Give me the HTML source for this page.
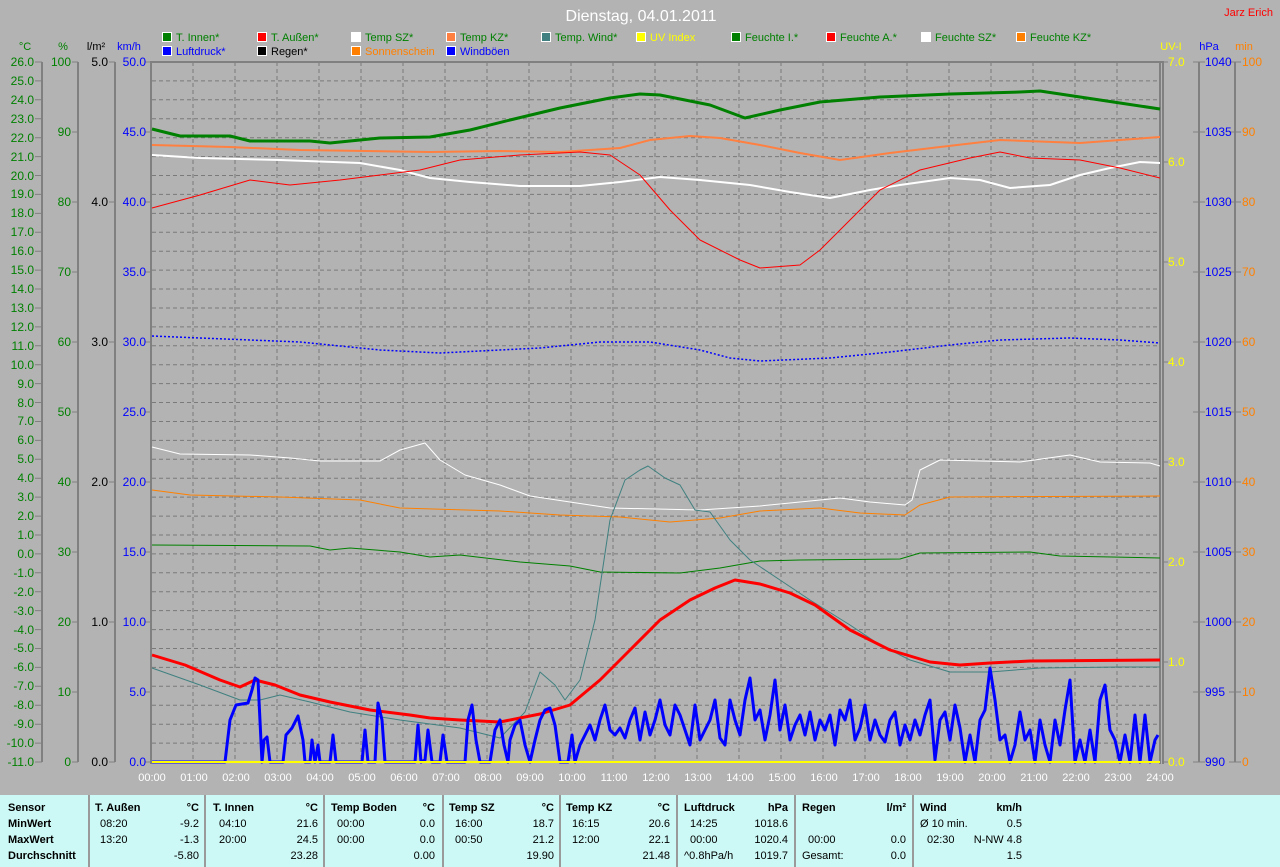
<!DOCTYPE html>
<html><head><meta charset="utf-8"><style>
html,body{margin:0;padding:0;width:1280px;height:867px;overflow:hidden;background:#b3b3b3;font-family:"Liberation Sans",sans-serif}
svg{display:block}
#tbl{position:absolute;left:0;top:795px;width:1280px;height:72px;background:#ccf8f5;font-size:11px;color:#000}
#tbl div{position:absolute;white-space:nowrap}
.b{font-weight:bold}
.sep{width:2px;top:0;height:72px;background:#9a9a9a}
.r{text-align:right}
</style></head><body>
<svg width="1280" height="795" viewBox="0 0 1280 795" font-family="Liberation Sans, sans-serif">
<rect width="1280" height="795" fill="#b3b3b3"/>
<text x="641" y="21" fill="#fff" font-size="16" text-anchor="middle">Dienstag, 04.01.2011</text>
<text x="1273" y="16" fill="#f00" font-size="11" text-anchor="end">Jarz Erich</text>
<g font-size="11">
<rect x="162.5" y="32.5" width="9" height="9" fill="#008000" stroke="#fff"/><text x="176" y="41" fill="#008000">T. Innen*</text>
<rect x="257.5" y="32.5" width="9" height="9" fill="#f00" stroke="#fff"/><text x="271" y="41" fill="#008000">T. Außen*</text>
<rect x="351.5" y="32.5" width="9" height="9" fill="#fff" stroke="#fff"/><text x="365" y="41" fill="#008000">Temp SZ*</text>
<rect x="446.5" y="32.5" width="9" height="9" fill="#ff8040" stroke="#fff"/><text x="460" y="41" fill="#008000">Temp KZ*</text>
<rect x="541.5" y="32.5" width="9" height="9" fill="#408080" stroke="#fff"/><text x="555" y="41" fill="#008000">Temp. Wind*</text>
<rect x="636.5" y="32.5" width="9" height="9" fill="#ff0" stroke="#fff"/><text x="650" y="41" fill="#ff0">UV Index</text>
<rect x="731.5" y="32.5" width="9" height="9" fill="#008000" stroke="#fff"/><text x="745" y="41" fill="#008000">Feuchte I.*</text>
<rect x="826.5" y="32.5" width="9" height="9" fill="#f00" stroke="#fff"/><text x="840" y="41" fill="#008000">Feuchte A.*</text>
<rect x="921.5" y="32.5" width="9" height="9" fill="#fff" stroke="#fff"/><text x="935" y="41" fill="#008000">Feuchte SZ*</text>
<rect x="1016.5" y="32.5" width="9" height="9" fill="#ff8000" stroke="#fff"/><text x="1030" y="41" fill="#008000">Feuchte KZ*</text>
<rect x="162.5" y="46.5" width="9" height="9" fill="#00f" stroke="#fff"/><text x="176" y="55" fill="#00f">Luftdruck*</text>
<rect x="257.5" y="46.5" width="9" height="9" fill="#000" stroke="#fff"/><text x="271" y="55" fill="#000">Regen*</text>
<rect x="351.5" y="46.5" width="9" height="9" fill="#ff8000" stroke="#fff"/><text x="365" y="55" fill="#ff8000">Sonnenschein</text>
<rect x="446.5" y="46.5" width="9" height="9" fill="#00f" stroke="#fff"/><text x="460" y="55" fill="#00f">Windböen</text>
</g>
<g font-size="11">
<text x="25" y="50" fill="#008000" text-anchor="middle">°C</text>
<text x="63" y="50" fill="#008000" text-anchor="middle">%</text>
<text x="96" y="50" fill="#000" text-anchor="middle">l/m²</text>
<text x="129" y="50" fill="#00f" text-anchor="middle">km/h</text>
<text x="1171" y="50" fill="#ff0" text-anchor="middle">UV-I</text>
<text x="1209" y="50" fill="#00f" text-anchor="middle">hPa</text>
<text x="1244" y="50" fill="#ff8000" text-anchor="middle">min</text>
</g>
<g stroke="#7a7a7a" stroke-dasharray="4,3" stroke-width="1">
<path d="M152 80.9H1160M152 99.8H1160M152 118.8H1160M152 137.7H1160M152 156.6H1160M152 175.5H1160M152 194.4H1160M152 213.4H1160M152 232.3H1160M152 251.2H1160M152 270.1H1160M152 289H1160M152 308H1160M152 326.9H1160M152 345.8H1160M152 364.7H1160M152 383.6H1160M152 402.5H1160M152 421.5H1160M152 440.4H1160M152 459.3H1160M152 478.2H1160M152 497.1H1160M152 516.1H1160M152 535H1160M152 553.9H1160M152 572.8H1160M152 591.7H1160M152 610.6H1160M152 629.6H1160M152 648.5H1160M152 667.4H1160M152 686.3H1160M152 705.2H1160M152 724.2H1160M152 743.1H1160"/>
<path d="M193 62V762M235 62V762M277 62V762M319 62V762M361 62V762M403 62V762M445 62V762M487 62V762M529 62V762M571 62V762M613 62V762M655 62V762M697 62V762M739 62V762M781 62V762M823 62V762M865 62V762M907 62V762M949 62V762M991 62V762M1033 62V762M1075 62V762M1117 62V762"/>
</g>
<g stroke="#808080" fill="none">
<path d="M151 61V764" stroke-width="2"/>
<path d="M150 62H1162" stroke-width="2"/>
<path d="M1160 61V764M1163 61V764" stroke-width="2"/>
<path d="M42 62V762M78 62V762M115 62V762M1199 62V762M1235 62V762" stroke-width="2"/>
<path d="M35 62H42M35 80.9H42M35 99.8H42M35 118.8H42M35 137.7H42M35 156.6H42M35 175.5H42M35 194.4H42M35 213.4H42M35 232.3H42M35 251.2H42M35 270.1H42M35 289H42M35 308H42M35 326.9H42M35 345.8H42M35 364.7H42M35 383.6H42M35 402.5H42M35 421.5H42M35 440.4H42M35 459.3H42M35 478.2H42M35 497.1H42M35 516.1H42M35 535H42M35 553.9H42M35 572.8H42M35 591.7H42M35 610.6H42M35 629.6H42M35 648.5H42M35 667.4H42M35 686.3H42M35 705.2H42M35 724.2H42M35 743.1H42M35 762H42"/>
<path d="M72 62H78M72 132H78M72 202H78M72 272H78M72 342H78M72 412H78M72 482H78M72 552H78M72 622H78M72 692H78M72 762H78"/>
<path d="M109 62H115M109 202H115M109 342H115M109 482H115M109 622H115M109 762H115"/>
<path d="M145 62H151M145 132H151M145 202H151M145 272H151M145 342H151M145 412H151M145 482H151M145 552H151M145 622H151M145 692H151M145 762H151"/>
<path d="M1163 62H1168M1163 162H1168M1163 262H1168M1163 362H1168M1163 462H1168M1163 562H1168M1163 662H1168M1163 762H1168"/>
<path d="M1193 62H1205M1193 132H1205M1193 202H1205M1193 272H1205M1193 342H1205M1193 412H1205M1193 482H1205M1193 552H1205M1193 622H1205M1193 692H1205M1193 762H1205"/>
<path d="M1229 62H1241M1229 132H1241M1229 202H1241M1229 272H1241M1229 342H1241M1229 412H1241M1229 482H1241M1229 552H1241M1229 622H1241M1229 692H1241M1229 762H1241"/>
</g>
<g font-size="12" fill="#008000" text-anchor="end">
<text x="34" y="66">26.0</text><text x="34" y="85">25.0</text><text x="34" y="104">24.0</text><text x="34" y="123">23.0</text><text x="34" y="142">22.0</text><text x="34" y="161">21.0</text><text x="34" y="180">20.0</text><text x="34" y="198">19.0</text><text x="34" y="217">18.0</text><text x="34" y="236">17.0</text><text x="34" y="255">16.0</text><text x="34" y="274">15.0</text><text x="34" y="293">14.0</text><text x="34" y="312">13.0</text><text x="34" y="331">12.0</text><text x="34" y="350">11.0</text><text x="34" y="369">10.0</text><text x="34" y="388">9.0</text><text x="34" y="407">8.0</text><text x="34" y="425">7.0</text><text x="34" y="444">6.0</text><text x="34" y="463">5.0</text><text x="34" y="482">4.0</text><text x="34" y="501">3.0</text><text x="34" y="520">2.0</text><text x="34" y="539">1.0</text><text x="34" y="558">0.0</text><text x="34" y="577">-1.0</text><text x="34" y="596">-2.0</text><text x="34" y="615">-3.0</text><text x="34" y="634">-4.0</text><text x="34" y="652">-5.0</text><text x="34" y="671">-6.0</text><text x="34" y="690">-7.0</text><text x="34" y="709">-8.0</text><text x="34" y="728">-9.0</text><text x="34" y="747">-10.0</text><text x="34" y="766">-11.0</text>
<text x="71" y="66">100</text><text x="71" y="136">90</text><text x="71" y="206">80</text><text x="71" y="276">70</text><text x="71" y="346">60</text><text x="71" y="416">50</text><text x="71" y="486">40</text><text x="71" y="556">30</text><text x="71" y="626">20</text><text x="71" y="696">10</text><text x="71" y="766">0</text>
</g>
<g font-size="12" fill="#000" text-anchor="end">
<text x="108" y="66">5.0</text><text x="108" y="206">4.0</text><text x="108" y="346">3.0</text><text x="108" y="486">2.0</text><text x="108" y="626">1.0</text><text x="108" y="766">0.0</text>
</g>
<g font-size="12" fill="#00f" text-anchor="end">
<text x="146" y="66">50.0</text><text x="146" y="136">45.0</text><text x="146" y="206">40.0</text><text x="146" y="276">35.0</text><text x="146" y="346">30.0</text><text x="146" y="416">25.0</text><text x="146" y="486">20.0</text><text x="146" y="556">15.0</text><text x="146" y="626">10.0</text><text x="146" y="696">5.0</text><text x="146" y="766">0.0</text>
</g>
<g font-size="12" fill="#ff0">
<text x="1168" y="66">7.0</text><text x="1168" y="166">6.0</text><text x="1168" y="266">5.0</text><text x="1168" y="366">4.0</text><text x="1168" y="466">3.0</text><text x="1168" y="566">2.0</text><text x="1168" y="666">1.0</text><text x="1168" y="766">0.0</text>
</g>
<g font-size="12" fill="#00f">
<text x="1205" y="66">1040</text><text x="1205" y="136">1035</text><text x="1205" y="206">1030</text><text x="1205" y="276">1025</text><text x="1205" y="346">1020</text><text x="1205" y="416">1015</text><text x="1205" y="486">1010</text><text x="1205" y="556">1005</text><text x="1205" y="626">1000</text><text x="1205" y="696">995</text><text x="1205" y="766">990</text>
</g>
<g font-size="12" fill="#ff8000">
<text x="1242" y="66">100</text><text x="1242" y="136">90</text><text x="1242" y="206">80</text><text x="1242" y="276">70</text><text x="1242" y="346">60</text><text x="1242" y="416">50</text><text x="1242" y="486">40</text><text x="1242" y="556">30</text><text x="1242" y="626">20</text><text x="1242" y="696">10</text><text x="1242" y="766">0</text>
</g>
<g font-size="11" fill="#fff" text-anchor="middle">
<text x="152" y="781">00:00</text><text x="194" y="781">01:00</text><text x="236" y="781">02:00</text><text x="278" y="781">03:00</text><text x="320" y="781">04:00</text><text x="362" y="781">05:00</text><text x="404" y="781">06:00</text><text x="446" y="781">07:00</text><text x="488" y="781">08:00</text><text x="530" y="781">09:00</text><text x="572" y="781">10:00</text><text x="614" y="781">11:00</text><text x="656" y="781">12:00</text><text x="698" y="781">13:00</text><text x="740" y="781">14:00</text><text x="782" y="781">15:00</text><text x="824" y="781">16:00</text><text x="866" y="781">17:00</text><text x="908" y="781">18:00</text><text x="950" y="781">19:00</text><text x="992" y="781">20:00</text><text x="1034" y="781">21:00</text><text x="1076" y="781">22:00</text><text x="1118" y="781">23:00</text><text x="1160" y="781">24:00</text>
</g>
<g fill="none" stroke-linejoin="round">
<polyline stroke="#008000" stroke-width="3" points="152,129 180,136 230,136 250,141 310,141 330,143 380,138 430,137 470,130 510,120 560,108 610,98 640,94 660,95 710,105 745,118 780,110 820,102 880,97 950,94 1020,92 1040,91 1080,97 1120,103 1160,109"/>
<polyline stroke="#ff8040" stroke-width="2" points="152,145 230,147 300,150 430,152 500,151 560,152 620,148 650,140 690,136 720,138 760,145 800,153 840,160 890,153 940,147 1000,140 1080,143 1160,137"/>
<polyline stroke="#fff" stroke-width="2" points="152,155 200,158 280,160 360,163 400,170 430,178 470,182 520,186 580,186 620,182 660,177 700,180 750,185 790,192 830,198 870,190 900,185 950,178 980,180 1010,188 1050,185 1080,175 1110,168 1140,162 1160,163"/>
<polyline stroke="#f00" stroke-width="1" points="152,208 200,195 250,180 290,185 340,180 380,175 420,170 460,160 520,155 580,152 610,155 640,175 670,210 700,240 740,260 760,268 800,265 820,250 850,220 880,190 920,170 970,158 1000,152 1030,158 1080,160 1120,168 1160,178"/>
<polyline stroke="#00f" stroke-width="1.5" stroke-dasharray="2,2" points="152,336 200,338 300,342 380,350 440,353 540,348 600,342 650,342 700,350 730,358 760,361 830,358 890,352 950,345 1000,340 1070,338 1120,340 1160,343"/>
<polyline stroke="#fff" stroke-width="1" points="152,447 180,454 250,455 290,458 320,461 380,461 400,450 425,443 440,460 465,475 500,485 530,496 570,502 610,508 700,510 760,506 800,502 840,498 870,502 905,505 912,500 920,470 940,460 1020,462 1070,455 1100,462 1150,463 1160,466"/>
<polyline stroke="#ff8000" stroke-width="1" points="152,490 190,495 280,497 360,500 400,508 500,511 560,515 620,517 670,522 720,518 760,511 820,508 860,513 905,515 920,505 950,497 1160,496"/>
<polyline stroke="#008000" stroke-width="1" points="152,545 310,546 330,550 350,548 400,552 430,557 460,555 520,562 570,566 600,572 680,573 720,568 760,561 800,560 900,559 920,553 1030,552 1060,556 1160,558"/>
<polyline stroke="#408080" stroke-width="1" points="152,668 200,685 240,700 260,700 280,695 310,702 350,712 400,720 460,728 500,738 525,712 540,672 555,685 565,700 580,680 595,620 610,520 625,480 640,470 648,466 665,478 680,485 695,510 710,512 730,540 750,560 780,580 810,600 850,625 880,645 910,660 950,672 990,672 1040,668 1120,667 1160,667"/>
<polyline stroke="#f00" stroke-width="3" points="152,655 185,665 220,680 240,687 255,680 275,685 300,695 330,702 370,710 410,715 430,718 460,720 500,722 540,714 570,705 600,680 630,650 660,620 690,600 715,588 735,580 760,584 790,593 815,605 850,630 890,650 930,662 960,665 990,663 1030,661 1160,660"/>
<polyline stroke="#00f" stroke-width="3" points="152,762 225,762 230,720 236,705 248,703 252,690 255,678 258,680 262,762 264,740 267,737 270,762 283,762 286,735 292,728 298,716 303,740 305,762 310,762 312,740 315,762 318,745 320,762 330,762 333,735 336,762 362,762 365,730 368,762 375,762 378,703 382,720 385,762 415,762 418,725 421,762 425,760 428,730 432,762 440,762 443,735 447,762 465,762 468,720 472,705 476,740 480,762 490,762 495,730 500,720 504,745 508,762 510,740 515,725 520,720 525,745 530,762 535,740 540,720 545,710 550,708 555,725 560,762 568,762 572,735 575,762 580,745 585,735 590,725 595,740 600,720 605,705 610,730 615,735 620,728 625,738 630,720 635,708 640,740 645,712 650,735 655,720 660,700 665,725 670,735 675,705 680,715 685,730 690,745 695,705 700,740 705,730 710,720 715,700 720,738 725,745 730,700 735,720 740,735 745,700 750,678 755,720 760,710 765,740 770,715 775,680 780,730 785,705 790,740 795,725 800,715 805,735 810,712 815,740 820,720 825,730 830,715 835,745 840,710 845,720 850,700 855,740 860,728 865,705 870,740 875,720 880,735 885,742 890,720 895,712 900,745 905,725 910,740 915,720 920,735 925,715 930,700 935,760 940,720 945,712 950,740 955,705 960,728 965,762 970,735 975,762 980,720 985,710 990,668 995,700 1000,740 1005,735 1010,762 1015,745 1020,712 1025,740 1030,730 1035,762 1040,720 1045,745 1050,762 1055,720 1060,745 1065,710 1070,680 1075,762 1080,740 1085,762 1090,730 1095,762 1100,700 1105,685 1110,730 1115,740 1120,762 1125,735 1130,762 1135,715 1140,762 1145,715 1150,762 1155,740 1158,735"/>
<path d="M152 762H1160" stroke="#ff0" stroke-width="2"/>
</g>
</svg>
<div id="tbl">
<div class="sep" style="left:88px"></div><div class="sep" style="left:204px"></div><div class="sep" style="left:323px"></div><div class="sep" style="left:442px"></div><div class="sep" style="left:559px"></div><div class="sep" style="left:676px"></div><div class="sep" style="left:794px"></div><div class="sep" style="left:912px"></div>
<div class="b" style="left:8px;top:7px">Sensor</div><div class="b" style="left:8px;top:23px">MinWert</div><div class="b" style="left:8px;top:39px">MaxWert</div><div class="b" style="left:8px;top:55px">Durchschnitt</div>

<div class="b" style="left:95px;top:7px">T. Außen</div><div class="b r" style="right:1081px;top:7px">°C</div>
<div style="left:100px;top:23px">08:20</div><div class="r" style="right:1081px;top:23px">-9.2</div>
<div style="left:100px;top:39px">13:20</div><div class="r" style="right:1081px;top:39px">-1.3</div>
<div class="r" style="right:1081px;top:55px">-5.80</div>

<div class="b" style="left:213px;top:7px">T. Innen</div><div class="b r" style="right:962px;top:7px">°C</div>
<div style="left:219px;top:23px">04:10</div><div class="r" style="right:962px;top:23px">21.6</div>
<div style="left:219px;top:39px">20:00</div><div class="r" style="right:962px;top:39px">24.5</div>
<div class="r" style="right:962px;top:55px">23.28</div>

<div class="b" style="left:331px;top:7px">Temp Boden</div><div class="b r" style="right:845px;top:7px">°C</div>
<div style="left:337px;top:23px">00:00</div><div class="r" style="right:845px;top:23px">0.0</div>
<div style="left:337px;top:39px">00:00</div><div class="r" style="right:845px;top:39px">0.0</div>
<div class="r" style="right:845px;top:55px">0.00</div>

<div class="b" style="left:449px;top:7px">Temp SZ</div><div class="b r" style="right:726px;top:7px">°C</div>
<div style="left:455px;top:23px">16:00</div><div class="r" style="right:726px;top:23px">18.7</div>
<div style="left:455px;top:39px">00:50</div><div class="r" style="right:726px;top:39px">21.2</div>
<div class="r" style="right:726px;top:55px">19.90</div>

<div class="b" style="left:566px;top:7px">Temp KZ</div><div class="b r" style="right:610px;top:7px">°C</div>
<div style="left:572px;top:23px">16:15</div><div class="r" style="right:610px;top:23px">20.6</div>
<div style="left:572px;top:39px">12:00</div><div class="r" style="right:610px;top:39px">22.1</div>
<div class="r" style="right:610px;top:55px">21.48</div>

<div class="b" style="left:684px;top:7px">Luftdruck</div><div class="b r" style="right:492px;top:7px">hPa</div>
<div style="left:690px;top:23px">14:25</div><div class="r" style="right:492px;top:23px">1018.6</div>
<div style="left:690px;top:39px">00:00</div><div class="r" style="right:492px;top:39px">1020.4</div>
<div style="left:684px;top:55px">^0.8hPa/h</div><div class="r" style="right:492px;top:55px">1019.7</div>

<div class="b" style="left:802px;top:7px">Regen</div><div class="b r" style="right:374px;top:7px">l/m²</div>
<div style="left:808px;top:39px">00:00</div><div class="r" style="right:374px;top:39px">0.0</div>
<div style="left:802px;top:55px">Gesamt:</div><div class="r" style="right:374px;top:55px">0.0</div>

<div class="b" style="left:920px;top:7px">Wind</div><div class="b r" style="right:258px;top:7px">km/h</div>
<div style="left:920px;top:23px">Ø 10 min.</div><div class="r" style="right:258px;top:23px">0.5</div>
<div style="left:927px;top:39px">02:30</div><div class="r" style="right:258px;top:39px">N-NW 4.8</div>
<div class="r" style="right:258px;top:55px">1.5</div>
</div>
</body></html>
